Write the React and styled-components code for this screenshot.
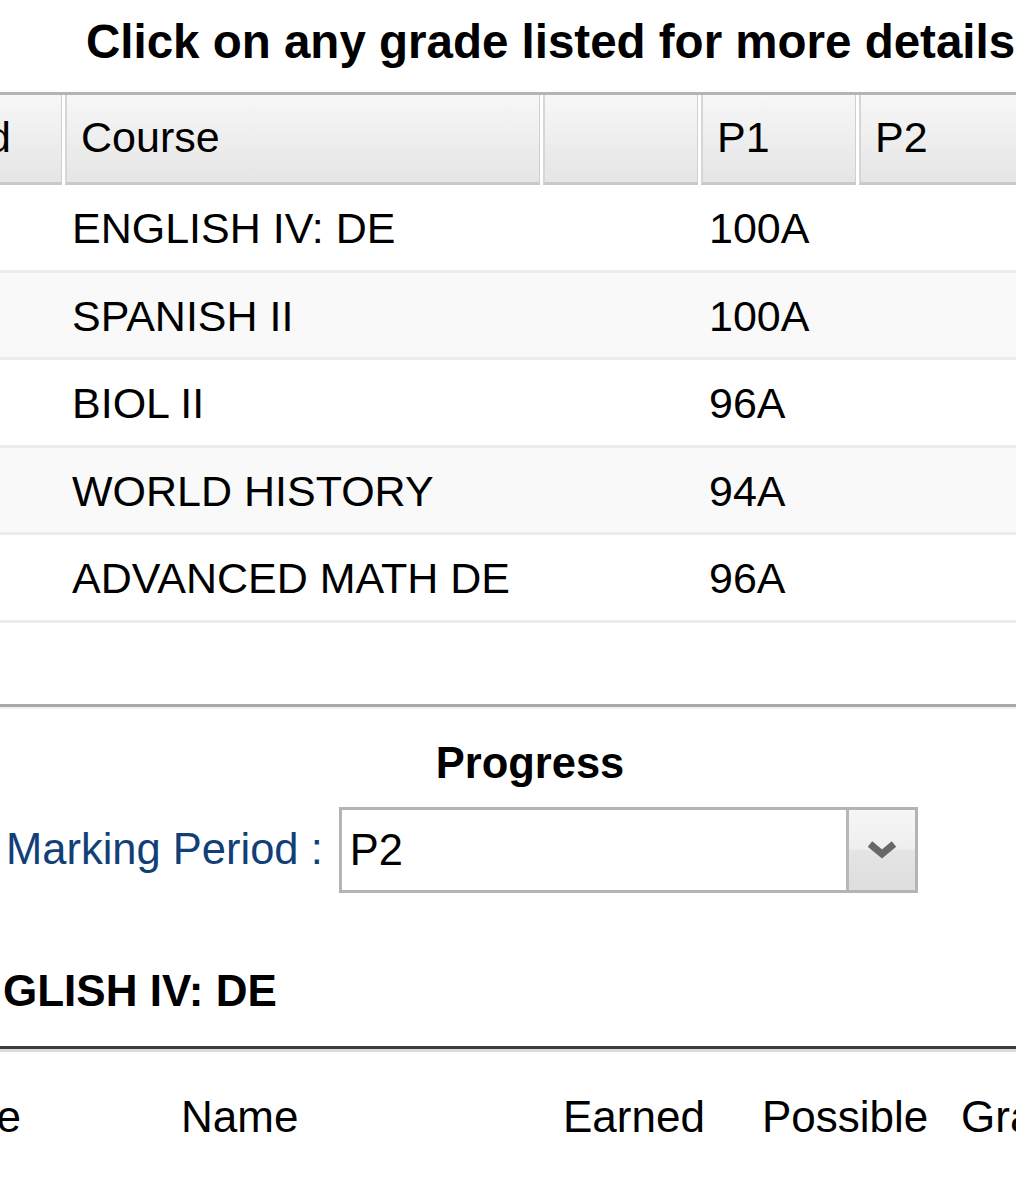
import React from 'react';
import styled, {createGlobalStyle} from 'styled-components';

const GlobalStyle = createGlobalStyle`
  body {
    margin: 0;
    background: #fff;
    font-family: "Liberation Sans", Arial, sans-serif;
    color: #000;
  }
`;

const Page = styled.div`
  width: 1016px;
  height: 1200px;
  overflow: hidden;
  background: #fff;
`;

const Title = styled.h2`
  margin: 0;
  padding: 0 0 8px 86px;
  font-size: 47.5px;
  line-height: 84px;
  font-weight: bold;
  white-space: nowrap;
`;

const Grid = styled.div`
  display: grid;
  grid-template-columns: 182px 478px 158px 158px 200px;
  width: 1176px;
  margin-left: -120px;
  border-top: 3px solid #b4b4b4;
`;

const HeadCell = styled.div`
  height: 87px;
  line-height: 84px;
  font-size: 43px;
  padding-left: ${p => p.$pad || 16}px;
  margin-left: ${p => (p.$first ? 0 : 3)}px;
  background: linear-gradient(#f7f7f7, #e5e5e5);
  border-left: ${p => (p.$first ? 'none' : '2px solid #d6d6d6')};
  border-right: 1px solid #d0d0d0;
  border-bottom: 3px solid #c9c9c9;
  white-space: nowrap;
  overflow: hidden;
  ${p => p.$first && 'text-align: right; padding: 0 50px 0 0;'}
`;

const Row = styled.div`
  display: contents;
`;

const Cell = styled.div`
  height: 84.5px;
  line-height: 86px;
  font-size: 43px;
  padding-left: ${p => p.$pad || 0}px;
  background: ${p => (p.$alt ? '#f9f9f9' : '#fff')};
  border-bottom: 3px solid #ececec;
  white-space: nowrap;
  overflow: hidden;
`;

const Spacer = styled.div`
  height: 81px;
`;

const Rule = styled.div`
  height: 3px;
  background: #aaa;
  border-bottom: 2px solid #f0f0f0;
`;

const Heading = styled.h3`
  margin: 24px 0 0;
  width: 1060px;
  text-align: center;
  font-size: 43.5px;
  line-height: 60px;
  font-weight: bold;
`;

const PeriodRow = styled.div`
  display: flex;
  align-items: center;
  gap: 16px;
  margin-top: 14px;
  padding-left: 6px;
`;

const Label = styled.span`
  color: #123f78;
  font-size: 43.5px;
  white-space: nowrap;
`;

const SelectBox = styled.div`
  display: flex;
  width: 579px;
  height: 86px;
  box-sizing: border-box;
  border: 3px solid #b4b4b4;
  background: #fff;
`;

const SelectValue = styled.div`
  flex: 1;
  padding-left: 8px;
  font-size: 43.5px;
  line-height: 80px;
`;

const ArrowBtn = styled.div`
  width: 66px;
  display: flex;
  align-items: center;
  justify-content: center;
  border-left: 3px solid #b8b8b8;
  background: linear-gradient(#f6f6f6 0%, #efefef 48%, #e4e4e4 52%, #dedede 100%);
`;

const CourseName = styled.h4`
  margin: 68px 0 0;
  padding-left: 3px;
  font-size: 44px;
  line-height: 60px;
  font-weight: bold;
  white-space: nowrap;
  overflow: hidden;
`;

const DarkRule = styled.div`
  margin-top: 25px;
  height: 3px;
  background: #3c3c3c;
  border-bottom: 3px solid #dcdcdc;
`;

const AssignHead = styled.div`
  display: grid;
  grid-template-columns: 281px 382px 199px 199px 200px;
  margin: 25px 0 0 -100px;
  font-size: 44px;
  line-height: 80px;
  white-space: nowrap;
  & > span:first-child {
    text-align: right;
    padding-right: 160px;
  }
`;

const Chevron = () => (
  <svg width="30" height="18" viewBox="0 0 30 18">
    <path d="M3 3 L15 13 L27 3" fill="none" stroke="#686868" strokeWidth="7" strokeLinejoin="miter"/>
  </svg>
);

const grades = [
  {course: 'ENGLISH IV: DE', p1: '100A'},
  {course: 'SPANISH II', p1: '100A'},
  {course: 'BIOL II', p1: '96A'},
  {course: 'WORLD HISTORY', p1: '94A'},
  {course: 'ADVANCED MATH DE', p1: '96A'},
];

export default function App() {
  return (
    <Page>
      <GlobalStyle/>
      <Title>Click on any grade listed for more details</Title>
      <Grid>
        <HeadCell $first>Period</HeadCell>
        <HeadCell $pad={14}>Course</HeadCell>
        <HeadCell/>
        <HeadCell $pad={14}>P1</HeadCell>
        <HeadCell $pad={14}>P2</HeadCell>
        {grades.map((g, i) => (
          <Row key={g.course}>
            <Cell $alt={i % 2 === 1}/>
            <Cell $alt={i % 2 === 1} $pad={10}>{g.course}</Cell>
            <Cell $alt={i % 2 === 1}/>
            <Cell $alt={i % 2 === 1} $pad={11}>{g.p1}</Cell>
            <Cell $alt={i % 2 === 1}/>
          </Row>
        ))}
      </Grid>
      <Spacer/>
      <Rule/>
      <Heading>Progress</Heading>
      <PeriodRow>
        <Label>Marking Period :</Label>
        <SelectBox>
          <SelectValue>P2</SelectValue>
          <ArrowBtn><Chevron/></ArrowBtn>
        </SelectBox>
      </PeriodRow>
      <CourseName>GLISH IV: DE</CourseName>
      <DarkRule/>
      <AssignHead>
        <span>Date</span>
        <span>Name</span>
        <span>Earned</span>
        <span>Possible</span>
        <span>Grade</span>
      </AssignHead>
    </Page>
  );
}
